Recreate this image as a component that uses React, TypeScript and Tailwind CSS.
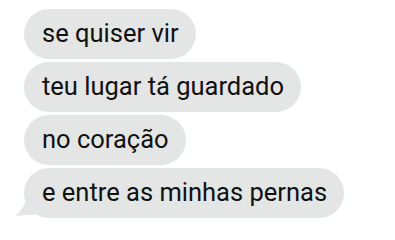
const messages = ['se quiser vir', 'teu lugar tá guardado', 'no coração', 'e entre as minhas pernas'];

export default function App() {
  return (
    <div className="w-[395px] h-[240px] bg-white overflow-hidden" style={{ fontFamily: 'Roboto, "Noto Sans", sans-serif' }}>
      <div className="flex flex-col items-start gap-[3px] pt-[9px] pl-[24px]">
        {messages.map((m, i) => (
          <div key={m} className="relative">
            <div className="h-[50px] flex items-center rounded-[25px] bg-[#e4e6e5] pl-[18px] pr-[17px] text-[25.5px] leading-none text-[#111111] whitespace-nowrap">
              {m}
            </div>
            {i === messages.length - 1 && (
              <svg className="absolute left-[-10px] bottom-[-2px]" width="26" height="20" viewBox="0 0 26 20">
                <path d="M26 0 L26 14 L1 16 Q9 10 12 0 Z" fill="#e4e6e5" />
              </svg>
            )}
          </div>
        ))}
      </div>
    </div>
  );
}
